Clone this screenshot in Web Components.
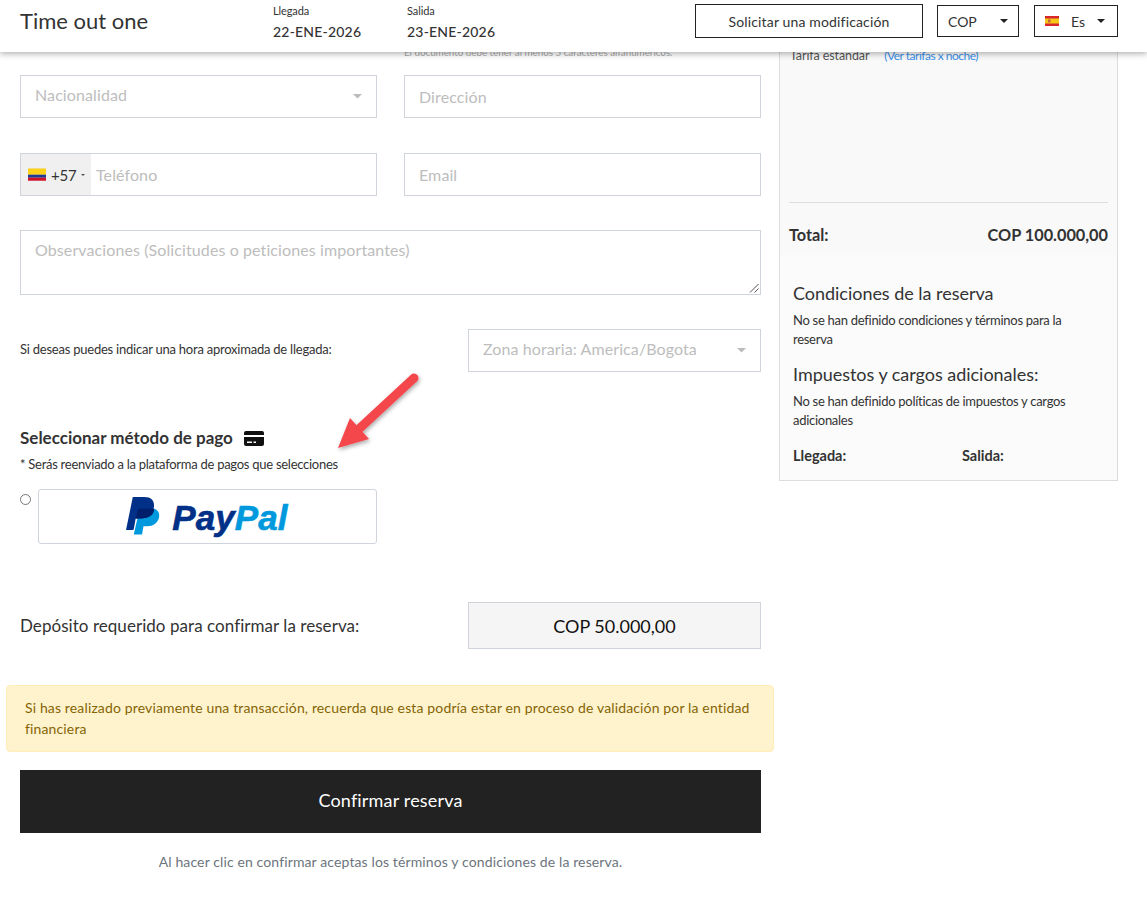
<!DOCTYPE html>
<html lang="es">
<head>
<meta charset="utf-8">
<title>Time out one</title>
<style>
    html, body { margin: 0; height: 902px; overflow: hidden; background: #fff; }
    body { font-family: Lato, "Liberation Sans", sans-serif; color: #212529; position: relative; }
</style>
</head>
<body>
<app-header></app-header>
<booking-page>
    <booking-form></booking-form>
    <summary-panel slot="side"></summary-panel>
</booking-page>
<script>
const CARET = (c, w, h) => `<svg width="${w}" height="${h}" viewBox="0 0 10 5" preserveAspectRatio="none" style="display:block"><path d="M0 0h10L5 5z" fill="${c}"/></svg>`;

class AppHeader extends HTMLElement {
    connectedCallback() {
        this.attachShadow({ mode: 'open' });
        this.shadowRoot.innerHTML = `
            <style>
                :host {
                    position: absolute; top: 0; left: 0; right: 0; z-index: 10; box-sizing: border-box;
                    display: flex; align-items: center; height: 52px; padding-bottom: 10px; background: #fff;
                    box-shadow: 0 2px 6px rgba(0,0,0,.3); color: #333;
                }
                .brand { font-size: 22px; margin-left: 20px; width: 253px; color: #333; line-height: 1; position: relative; }
                .date { width: 134px; position: relative; top: 2px; }
                .date small { display: block; font-size: 11px; line-height: 14px; margin-top: -2px; letter-spacing: -.1px; }
                .date b { display: block; font-size: 14px; font-weight: 500; line-height: 18px; margin-top: 5px; letter-spacing: .2px; }
                .actions { margin-left: auto; margin-right: 29px; display: flex; align-items: center; }
                .btn {
                    box-sizing: border-box; border: 1px solid #222; height: 32px; display: flex; align-items: center;
                    font-size: 14px; color: #333; background: #fff;
                }
                .mod { width: 228px; height: 34px; justify-content: center; letter-spacing: .15px; }
                .cur { width: 82px; margin-left: 14px; padding: 0 10px; justify-content: space-between; }
                .lang { width: 84px; margin-left: 15px; padding: 0 12px 0 10px; }
                .lang span { margin-left: 12px; margin-right: auto; }
            </style>
            <div class="brand">Time out one</div>
            <div class="date"><small>Llegada</small><b>22-ENE-2026</b></div>
            <div class="date"><small>Salida</small><b>23-ENE-2026</b></div>
            <div class="actions">
                <div class="btn mod">Solicitar una modificación</div>
                <div class="btn cur">COP ${CARET('#222', 8, 4)}</div>
                <div class="btn lang">
                    <svg width="14" height="10" viewBox="0 0 14 10"><rect width="14" height="10" fill="#d8262c"/><rect y="2.500" width="14" height="5" fill="#f5c518"/><rect x="3" y="3.500" width="2.500" height="3" fill="#c9653a"/></svg>
                    <span>Es</span>${CARET('#222', 8, 4)}
                </div>
            </div>`;
    }
}

class BookingPage extends HTMLElement {
    connectedCallback() {
        this.attachShadow({ mode: 'open' });
        this.shadowRoot.innerHTML = `
            <style>
                :host { display: grid; grid-template-columns: 741px 339px; column-gap: 18px; padding: 0 29px 0 20px; align-items: start; }
            </style>
            <slot></slot><slot name="side"></slot>`;
    }
}

class FormField extends HTMLElement {
    connectedCallback() {
        this.attachShadow({ mode: 'open' });
        const select = this.hasAttribute('select');
        this.shadowRoot.innerHTML = `
            <style>
                :host {
                    box-sizing: border-box; display: flex; align-items: center; height: 43px;
                    border: 1px solid #ced4da; padding: 0 14px; background: #fff;
                    font-size: 16px; color: #bdbdbd; letter-spacing: .1px;
                }
                span { flex: 1; }
                :host([select]) span { position: relative; top: -2px; }
            </style>
            <span>${this.getAttribute('label')}</span>
            ${select ? CARET('#bbb', 9, 4.5) : ''}`;
    }
}

class PhoneField extends HTMLElement {
    connectedCallback() {
        this.attachShadow({ mode: 'open' });
        this.shadowRoot.innerHTML = `
            <style>
                :host {
                    box-sizing: border-box; display: flex; align-items: stretch; height: 43px;
                    border: 1px solid #ced4da; background: #fff; font-size: 16px;
                }
                .code { width: 70px; background: #f0f0f0; display: flex; align-items: center; padding-left: 7px; box-sizing: border-box; color: #333; font-size: 15px; letter-spacing: -.2px; }
                .code svg.flag { margin-right: 5px; }
                .code svg:last-child { margin-left: 4px; }
                .ph { color: #bdbdbd; padding-left: 5px; display: flex; align-items: center; letter-spacing: .1px; }
            </style>
            <div class="code">
                <svg class="flag" width="18" height="13" viewBox="0 0 18 13"><rect width="18" height="13" fill="#e8e8e8"/><rect x="0" y=".5" width="18" height="6.200" fill="#fcd116"/><rect y="6.700" width="18" height="3" fill="#1f3a93"/><rect y="9.700" width="18" height="3" fill="#ce1126"/></svg>
                +57
                ${CARET('#555', 4, 2)}
            </div>
            <div class="ph">Teléfono</div>`;
    }
}

class PaymentOption extends HTMLElement {
    connectedCallback() {
        this.attachShadow({ mode: 'open' });
        this.shadowRoot.innerHTML = `
            <style>
                :host { display: flex; align-items: flex-start; gap: 7px; width: 357px; }
                .radio { box-sizing: border-box; width: 11px; height: 11px; border: 1px solid #767676; border-radius: 50%; margin-top: 5px; flex: none; background: #fff; }
                .card {
                    box-sizing: border-box; width: 339px; height: 55px; border: 1px solid #ced4da; border-radius: 3px;
                    display: flex; align-items: center; justify-content: center; padding-right: 1px;
                }
                .word {
                    font-family: "Liberation Sans", Arial, sans-serif; font-weight: 700; font-style: italic; font-size: 35px;
                    letter-spacing: .1px; margin-left: 12px; color: #003087; line-height: 1; position: relative; top: 1px;
                    -webkit-text-stroke: .6px currentColor;
                }
                .word i { color: #0099dd; }
                svg { position: relative; top: -1px; }
            </style>
            <div class="radio"></div>
            <div class="card">
                <svg width="34" height="38" viewBox="0 0 35 39">
                    <path d="M14 12h15c4 1 6 5 5 9-1.500 6-6 9-12 9h-4L16.500 38.500H8z" fill="#0099dd"/>
                    <path d="M7 0H19c8 0 11 5 9.500 11.500C27 19 21 22 15 22H10L8 33a1 1 0 0 1-1 1H0z" fill="#003087"/>
                    <path d="M12.500 12H29c.3 5-4 10-14 10h-5z" fill="#001f6b"/>
                </svg>
                <span class="word">Pay<i>Pal</i></span>
            </div>`;
    }
}

class BookingForm extends HTMLElement {
    connectedCallback() {
        this.attachShadow({ mode: 'open' });
        this.shadowRoot.innerHTML = `
            <style>
                :host { display: block; padding-top: 47px; }
                .hint { margin-left: 384px; font-size: 9.800px; line-height: 11px; color: #aaa; height: 28px; }
                .row { display: grid; grid-template-columns: 357px 357px; column-gap: 27px; margin-bottom: 35px; }
                .row + .row { margin-bottom: 34px; }
                .area {
                    box-sizing: border-box; height: 65px; border: 1px solid #ced4da; padding: 9px 14px;
                    font-size: 16px; line-height: 20px; color: #bdbdbd; position: relative; letter-spacing: .1px;
                }
                .area svg { position: absolute; right: 1px; bottom: 1px; }
                .time { display: flex; justify-content: space-between; align-items: center; margin-top: 34px; font-size: 13px; color: #333; letter-spacing: -.23px; }
                .time > span { padding-bottom: 3px; }
                .time form-field { width: 293px; }
                h3 { margin: 0; font-size: 17px; font-weight: 700; line-height: 20px; color: #333; display: flex; align-items: center; gap: 11px; margin-top: 56px; }
                .note { font-size: 13px; line-height: 16px; color: #333; margin: 8px 0 17px; letter-spacing: -.27px; }
                .deposit { display: flex; justify-content: space-between; align-items: center; margin-top: 58px; font-size: 17px; letter-spacing: .05px; color: #333; }
                .amount {
                    box-sizing: border-box; width: 293px; height: 47px; border: 1px solid #ced4da; background: #f5f5f5;
                    display: flex; align-items: center; justify-content: center; color: #111; font-size: 18px; letter-spacing: 0;
                }
                .alert {
                    box-sizing: border-box; margin: 36px -13px 0 -14px; height: 67px; padding: 11px 18px;
                    background: #fff3cd; border: 1px solid #ffeeba; border-radius: 4px; color: #856404;
                    font-size: 14px; line-height: 21px; letter-spacing: .14px;
                }
                .confirm {
                    box-sizing: border-box; margin-top: 18px; height: 63px; padding-bottom: 3px; background: #222; color: #fff; display: flex;
                    align-items: center; justify-content: center; font-size: 18px; letter-spacing: .17px;
                }
                .terms { text-align: center; margin-top: 20px; font-size: 14px; line-height: 18px; color: #6c757d; letter-spacing: .12px; }
                .arrow { position: absolute; left: 330px; top: 366px; }
            </style>
            <div class="hint">El documento debe tener al menos 5 caracteres alfanuméricos.</div>
            <div class="row"><form-field select label="Nacionalidad"></form-field><form-field label="Dirección"></form-field></div>
            <div class="row"><phone-field></phone-field><form-field label="Email"></form-field></div>
            <div class="area">Observaciones (Solicitudes o peticiones importantes)
                <svg width="10" height="10" viewBox="0 0 10 10"><path d="M9.500 1L1 9.500M9.500 5.500L5.500 9.500" stroke="#555" fill="none"/></svg>
            </div>
            <div class="time"><span>Si deseas puedes indicar una hora aproximada de llegada:</span><form-field select label="Zona horaria: America/Bogota"></form-field></div>
            <h3>Seleccionar método de pago
                <svg width="20" height="15" viewBox="0 0 20 15"><path d="M2 0h16a2 2 0 0 1 2 2v2H0V2a2 2 0 0 1 2-2zM0 6h20v7a2 2 0 0 1-2 2H2a2 2 0 0 1-2-2z" fill="#111"/><rect x="3" y="10.500" width="5" height="1.500" fill="#fff"/><rect x="9.500" y="10.500" width="2.500" height="1.500" fill="#fff"/></svg>
            </h3>
            <div class="note">* Serás reenviado a la plataforma de pagos que selecciones</div>
            <payment-option></payment-option>
            <div class="deposit"><span>Depósito requerido para confirmar la reserva:</span><div class="amount">COP 50.000,00</div></div>
            <div class="alert">Si has realizado previamente una transacción, recuerda que esta podría estar en proceso de validación por la entidad financiera</div>
            <div class="confirm">Confirmar reserva</div>
            <div class="terms">Al hacer clic en confirmar aceptas los términos y condiciones de la reserva.</div>
            <svg class="arrow" width="100" height="90" viewBox="0 0 100 90">
                <defs><filter id="s" x="-20%" y="-20%" width="140%" height="140%"><feDropShadow dx="1" dy="2" stdDeviation="2" flood-color="#000" flood-opacity=".35"/></filter></defs>
                <g filter="url(#s)" fill="#f4464b">
                    <path d="M84 12L30 62" stroke="#f4464b" stroke-width="9" stroke-linecap="round"/>
                    <path d="M8 82L20 52L39 73z"/>
                </g>
            </svg>`;
    }
}

class SummaryPanel extends HTMLElement {
    connectedCallback() {
        this.attachShadow({ mode: 'open' });
        this.shadowRoot.innerHTML = `
            <style>
                :host {
                    box-sizing: border-box; display: block; height: 481px; border: 1px solid #ddd; border-top: 0;
                    background: #fbfbfb; font-size: 13px; color: #333; position: relative;
                }
                .top { background: #f9f9f9; height: 255px; padding: 0 9px; box-sizing: border-box; }
                .rate { padding-top: 49px; padding-left: 1px; height: 203px; box-sizing: border-box; border-bottom: 1px solid #ddd; font-size: 12.500px; line-height: 14px; color: #555; letter-spacing: -.1px; }
                .rate a { color: #3b8fe8; margin-left: 12px; font-size: 12px; letter-spacing: -.5px; }
                .total { display: flex; justify-content: space-between; align-items: center; height: 51px; padding-top: 12px; box-sizing: border-box; font-size: 16.300px; font-weight: 700; color: #333; }
                .bottom { padding: 26px 13px 0 13px; }
                h4 { margin: 0; font-size: 18px; font-weight: 400; line-height: 24px; color: #333; letter-spacing: -.03px; }
                p { margin: 6px 0 13px; line-height: 19px; letter-spacing: -.28px; }
                .dates { display: flex; font-weight: 700; font-size: 14.500px; margin-top: 17px; }
                .dates span { flex: none; width: 169px; }
            </style>
            <div class="top">
                <div class="rate">Tarifa estandar <a>(Ver tarifas x noche)</a></div>
                <div class="total"><span>Total:</span><span>COP 100.000,00</span></div>
            </div>
            <div class="bottom">
                <h4>Condiciones de la reserva</h4>
                <p>No se han definido condiciones y términos para la reserva</p>
                <h4>Impuestos y cargos adicionales:</h4>
                <p>No se han definido políticas de impuestos y cargos adicionales</p>
                <div class="dates"><span>Llegada:</span><span>Salida:</span></div>
            </div>`;
    }
}

customElements.define('app-header', AppHeader);
customElements.define('booking-page', BookingPage);
customElements.define('form-field', FormField);
customElements.define('phone-field', PhoneField);
customElements.define('payment-option', PaymentOption);
customElements.define('booking-form', BookingForm);
customElements.define('summary-panel', SummaryPanel);
</script>
</body>
</html>
